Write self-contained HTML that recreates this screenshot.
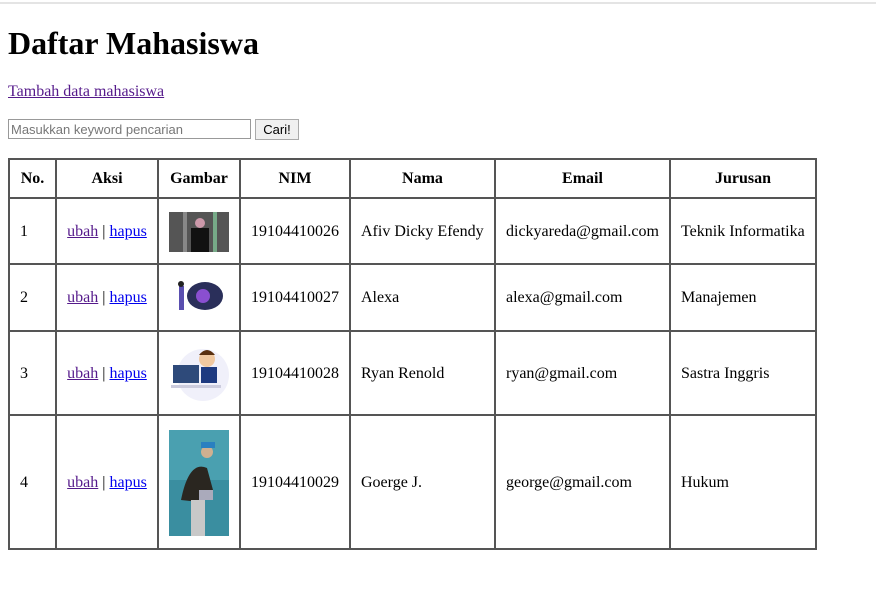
<!DOCTYPE html>
<html><head><style>
body{margin:0;font-family:"Liberation Serif",serif;font-size:16px;color:#000;background:#fff}
.top{height:2px;background:#e4e4e4;margin-top:2px}
h1{font-size:32px;margin:0;position:absolute;left:8px;top:23px;line-height:40px}
a{color:#0000ee}a.v{color:#551a8b}
.lnk{position:absolute;left:8px;top:83px}
.srch{position:absolute;left:8px;top:119px}
input{width:237px;height:16px;border:1px solid #999;padding:1px 2px;font:13px "Liberation Sans",sans-serif;margin:0;color:#777}
button{position:absolute;left:247px;top:0;height:21px;width:44px;font:13px "Liberation Sans",sans-serif;border:1px solid #aaa;background:#f0f0f0;padding:0}
table{position:absolute;left:8px;top:158px;border-collapse:collapse;border:2px solid #555;table-layout:fixed;width:807px}
td,th{border:2px solid #555;padding:1px 0 0 10px;text-align:left;white-space:nowrap;overflow:hidden}
th{text-align:center;height:37px;padding:0}
td.c{text-align:center;padding:1px 0 0 0}
.img{display:block;margin:0 auto}
</style></head><body>
<div class="top"></div>
<h1>Daftar Mahasiswa</h1>
<div class="lnk"><a class="v" href="#">Tambah data mahasiswa</a></div>
<div class="srch"><input value="Masukkan keyword pencarian"><button>Cari!</button></div>
<table>
<colgroup><col style="width:47px"><col style="width:102px"><col style="width:82px"><col style="width:110px"><col style="width:145px"><col style="width:175px"><col style="width:146px"></colgroup>
<tr><th>No.</th><th>Aksi</th><th>Gambar</th><th>NIM</th><th>Nama</th><th>Email</th><th>Jurusan</th></tr>
<tr style="height:66px"><td>1</td><td class="c"><a class="v" href="#">ubah</a> | <a href="#">hapus</a></td><td class="c"><svg class="img" width="60" height="40"><rect width="60" height="40" fill="#555"/><rect x="14" y="0" width="4" height="40" fill="#888"/><rect x="44" y="0" width="4" height="40" fill="#7a8"/><rect x="22" y="16" width="18" height="24" fill="#111"/><circle cx="31" cy="11" r="5" fill="#c9a"/></svg></td><td>19104410026</td><td>Afiv Dicky Efendy</td><td>dickyareda@gmail.com</td><td>Teknik Informatika</td></tr>
<tr style="height:67px"><td>2</td><td class="c"><a class="v" href="#">ubah</a> | <a href="#">hapus</a></td><td class="c"><svg class="img" width="60" height="36"><ellipse cx="36" cy="16" rx="18" ry="14" fill="#2a2f5a"/><circle cx="34" cy="16" r="7" fill="#8a4fd0"/><rect x="10" y="6" width="5" height="24" fill="#5a4fb0"/><circle cx="12" cy="4" r="3" fill="#222"/></svg></td><td>19104410027</td><td>Alexa</td><td>alexa@gmail.com</td><td>Manajemen</td></tr>
<tr style="height:84px"><td>3</td><td class="c"><a class="v" href="#">ubah</a> | <a href="#">hapus</a></td><td class="c"><svg class="img" width="60" height="58"><circle cx="34" cy="30" r="26" fill="#f0f0fa"/><rect x="4" y="20" width="26" height="18" fill="#2e4a7a"/><rect x="2" y="40" width="50" height="3" fill="#ccd"/><circle cx="38" cy="14" r="8" fill="#f0c8a0"/><path d="M30 10 Q38 0 46 10" fill="#5a3010"/><rect x="32" y="22" width="16" height="16" fill="#1e3a80"/></svg></td><td>19104410028</td><td>Ryan Renold</td><td>ryan@gmail.com</td><td>Sastra Inggris</td></tr>
<tr style="height:134px"><td>4</td><td class="c"><a class="v" href="#">ubah</a> | <a href="#">hapus</a></td><td class="c"><svg class="img" width="60" height="106"><rect width="60" height="106" fill="#3a8ea0"/><rect x="0" y="0" width="60" height="50" fill="#4aa0b0"/><path d="M12 70 Q20 30 38 38 L44 60 L30 72 Z" fill="#2a2620"/><circle cx="38" cy="22" r="6" fill="#d0b090"/><rect x="32" y="12" width="14" height="6" fill="#2a80c0"/><rect x="22" y="70" width="14" height="36" fill="#c8c8c8"/><rect x="30" y="60" width="14" height="10" fill="#aab"/></svg></td><td>19104410029</td><td>Goerge J.</td><td>george@gmail.com</td><td>Hukum</td></tr>
</table>
</body></html>
